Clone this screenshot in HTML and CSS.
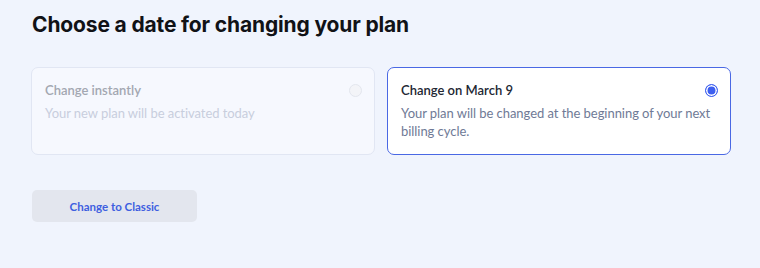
FILE: index.html
```html
<!DOCTYPE html>
<html lang="en">
<head>
<meta charset="utf-8">
<title>Choose a date</title>
<link rel="stylesheet" href="styles.css">
</head>
<body>
<main class="page">
  <h1 class="heading">Choose a date for changing your plan</h1>
  <div class="options">
    <div class="option option--disabled">
      <div class="option-head">
        <span class="option-title">Change instantly</span>
        <span class="radio"></span>
      </div>
      <p class="option-desc">Your new plan will be activated today</p>
    </div>
    <div class="option option--selected">
      <div class="option-head">
        <span class="option-title">Change on March 9</span>
        <span class="radio radio--checked"></span>
      </div>
      <p class="option-desc">Your plan will be changed at the beginning of your next billing cycle.</p>
    </div>
  </div>
  <button class="btn" type="button">Change to Classic</button>
</main>
</body>
</html>
```

FILE: styles.css
```css
* { box-sizing: border-box; }
html, body { margin: 0; padding: 0; }
body {
  background: #f0f4fd;
  font-family: "Lato", "Noto Sans", sans-serif;
  width: 760px;
  height: 268px;
  overflow: hidden;
}
.page {
  padding: 11px 28px 0 32px;
}
.heading {
  margin: 0;
  font-family: "Inter", "Noto Sans", sans-serif;
  font-size: 21px;
  line-height: 28px;
  font-weight: 700;
  color: #111216;
  letter-spacing: -0.15px;
}
.options {
  margin-top: 28px;
  display: grid;
  grid-template-columns: 344px 344px;
  gap: 12px;
  margin-left: -1px;
}
.option {
  border: 1px solid #e1e6f3;
  border-radius: 7px;
  padding: 13px 13px 14px 13px;
  background: #f6f8fe;
  height: 88px;
}
.option--selected {
  background: #ffffff;
  border-color: #4a68e4;
}
.option-head {
  display: flex;
  justify-content: space-between;
  align-items: center;
  height: 18px;
}
.option-title {
  font-size: 13px;
  font-weight: 600;
  color: #222733;
  line-height: 18px;
}
.option--disabled .option-title { color: #a3a7b1; }
.option-desc {
  margin: 5px 0 0;
  font-size: 13px;
  line-height: 18px;
  color: #6f7a96;
  padding-right: 4px;
  letter-spacing: -0.05px;
}
.option--disabled .option-desc { color: #c8cedd; }
.radio {
  width: 13px;
  height: 13px;
  border-radius: 50%;
  border: 1px solid #e3e6ee;
  background: #f3f4f8;
  margin-right: -1px;
}
.radio--checked {
  border: 1.5px solid #3d5ff0;
  background: #3d5ff0;
  box-shadow: inset 0 0 0 1.5px #ffffff;
}
.btn {
  margin-top: 35px;
  width: 165px;
  height: 32px;
  border: 0;
  border-radius: 5px;
  background: #e3e6ee;
  color: #3e5fe0;
  font-family: inherit;
  font-size: 11.5px;
  font-weight: 700;
  cursor: pointer;
}
```
